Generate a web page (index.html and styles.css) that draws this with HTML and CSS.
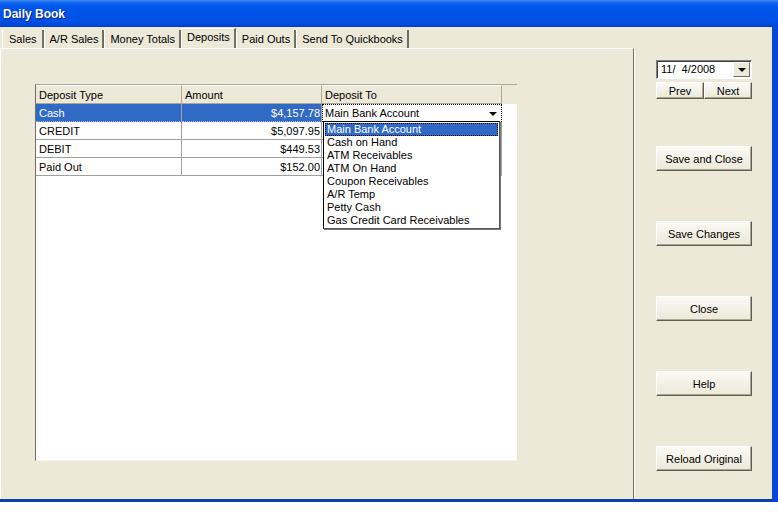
FILE: index.html
```html
<!DOCTYPE html>
<html lang="en">
<head>
  <meta charset="UTF-8">
  <title>Daily Book</title>
  <link rel="stylesheet" href="styles.css">
</head>
<body>
  <div class="window">
    <div class="titlebar">Daily Book</div>
    <div class="client">
      <div class="tabs">
        <div class="tab first">Sales</div>
        <div class="tab">A/R Sales</div>
        <div class="tab">Money Totals</div>
        <div class="tab active">Deposits</div>
        <div class="tab">Paid Outs</div>
        <div class="tab">Send To Quickbooks</div>
      </div>
      <div class="frame">
        <div class="page">
          <div class="grid">
            <div class="grid-head">
              <div class="hcell c1">Deposit Type</div>
              <div class="hcell c2">Amount</div>
              <div class="hcell c3">Deposit To</div>
            </div>
            <div class="grid-row selected">
              <div class="cell c1">Cash</div>
              <div class="cell c2 num">$4,157.78</div>
              <div class="cell c3 editor">
                <span>Main Bank Account</span>
                <span class="drop-btn"><span class="arrow"></span></span>
              </div>
            </div>
            <div class="grid-row">
              <div class="cell c1">CREDIT</div>
              <div class="cell c2 num">$5,097.95</div>
              <div class="cell c3"></div>
            </div>
            <div class="grid-row">
              <div class="cell c1">DEBIT</div>
              <div class="cell c2 num">$449.53</div>
              <div class="cell c3"></div>
            </div>
            <div class="grid-row">
              <div class="cell c1">Paid Out</div>
              <div class="cell c2 num">$152.00</div>
              <div class="cell c3"></div>
            </div>

            <ul class="droplist">
              <li class="hi">Main Bank Account</li>
              <li>Cash on Hand</li>
              <li>ATM Receivables</li>
              <li>ATM On Hand</li>
              <li>Coupon Receivables</li>
              <li>A/R Temp</li>
              <li>Petty Cash</li>
              <li>Gas Credit Card Receivables</li>
            </ul>
          </div>
        </div>
        <div class="side">
          <div class="datebox">
            <span>11/&nbsp; 4/2008</span>
            <span class="drop-btn"><span class="arrow"></span></span>
          </div>
          <div class="prevnext">
            <button class="btn small">Prev</button>
            <button class="btn small">Next</button>
          </div>
          <button class="btn big first">Save and Close</button>
          <button class="btn big">Save Changes</button>
          <button class="btn big">Close</button>
          <button class="btn big">Help</button>
          <button class="btn big">Reload Original</button>
        </div>
      </div>
    </div>
  </div>
</body>
</html>
```

FILE: styles.css
```css
:root {
  --face: #ece9d8;
  --shadow: #aca899;
  --dark: #716f64;
  --sel: #316ac5;
  --xpblue: #0054e3;
}

body {
  margin: 0;
  background: #fff;
  font-family: 'Liberation Sans', Arial, sans-serif;
  font-size: 11px;
  color: #000;
}

.window {
  width: 778px;
  height: 512px;
  background: #fff;
}

.titlebar {
  height: 27px;
  box-sizing: border-box;
  padding: 7px 0 0 3px;
  font-size: 12px;
  font-weight: bold;
  color: #fff;
  text-shadow: 1px 1px 0 #0a1e8c;
  background: linear-gradient(to bottom, #3c8cf6 0px, #0f62ee 3px, #0055ea 8px, #0052e6 20px, #0048dc 25px, #003fcb 27px);
}

.client {
  width: 778px;
  height: 475px;
  box-sizing: border-box;
  background: var(--face);
  border-right: 6px solid #0747d6;
  border-bottom: 3px solid #0a3fb8;
  display: flex;
  flex-direction: column;
}

/* tabs */
.tabs {
  height: 21px;
  display: flex;
  align-items: flex-end;
  padding-left: 2px;
}

.tab {
  height: 18px;
  box-sizing: border-box;
  padding: 3px 4px 0 5px;
  border-left: 1px solid #fff;
  border-right: 2px solid var(--dark);
  white-space: nowrap;
}

.tab.first {
  padding-left: 6px;
  padding-right: 5px;
}

.tab.active {
  height: 20px;
  padding: 2px 4px 0 5px;
  background: var(--face);
  border-top: 1px solid #fff;
}

.frame {
  flex: 1;
  display: flex;
}

.page {
  width: 634px;
  box-sizing: border-box;
  border-top: 1px solid #fff;
  border-left: 1px solid #fff;
  border-right: 1px solid var(--dark);
  padding: 35px 0 0 34px;
}

/* grid */
.grid {
  position: relative;
  width: 482px;
  height: 377px;
  box-sizing: border-box;
  background: #fff;
  border-top: 1px solid var(--shadow);
  border-left: 1px solid var(--dark);
  border-bottom: 1px solid #f4f2ea;
}

.grid-head,
.grid-row {
  display: grid;
  grid-template-columns: 146px 140px 180px;
}

.grid-head {
  height: 19px;
  background: var(--face);
}

.hcell {
  padding: 3px 0 0 3px;
  border-right: 1px solid var(--shadow);
  border-bottom: 1px solid var(--shadow);
  border-top: 1px solid #fff;
}

.grid-row {
  height: 18px;
}

.cell {
  box-sizing: border-box;
  padding: 3px 2px 0 3px;
  border-right: 1px solid #a0a0a0;
  border-bottom: 1px solid #a0a0a0;
  white-space: nowrap;
}

.cell.num {
  text-align: right;
  padding-right: 1px;
}

.selected .c1,
.selected .c2 {
  background: var(--sel);
  color: #fff;
  border-bottom: 1px dotted #9fb5e0;
}

.editor {
  display: flex;
  justify-content: space-between;
  padding: 2px 0 0 2px;
  border: 1px dotted #000;
}

.drop-btn {
  width: 16px;
  height: 15px;
  box-sizing: border-box;
  display: flex;
  align-items: center;
  justify-content: center;
  margin-top: -1px;
}

.arrow {
  width: 0;
  height: 0;
  border-left: 4px solid transparent;
  border-right: 4px solid transparent;
  border-top: 4px solid #000;
}

.droplist {
  position: absolute;
  left: 287px;
  top: 36px;
  width: 177px;
  margin: 0;
  padding: 1px 0;
  list-style: none;
  background: #fff;
  border: 1px solid #000;
  border-right-color: #555;
  border-bottom-color: #555;
  box-shadow: 1px 1px 0 #777;
  box-sizing: border-box;
}

.droplist li {
  height: 13px;
  line-height: 13px;
  padding-left: 3px;
}

.droplist li.hi {
  background: var(--sel);
  color: #fff;
  outline: 1px dotted #000;
  outline-offset: -1px;
  margin: 0 1px;
  padding-left: 2px;
}

/* right column */
.side {
  width: 132px;
  box-sizing: border-box;
  padding: 12px 0 0 21px;
  display: flex;
  flex-direction: column;
  border-left: 1px solid #fff;
}

.datebox {
  width: 96px;
  height: 19px;
  box-sizing: border-box;
  background: #fff;
  border: 1px solid;
  border-color: #7f7f7f #fff #fff #7f7f7f;
  box-shadow: inset 1px 1px 0 #404040;
  display: flex;
  justify-content: space-between;
  padding: 2px 1px 0 4px;
}

.datebox .drop-btn {
  background: var(--face);
  border: 1px solid;
  border-color: #fff var(--dark) var(--dark) #fff;
  height: 15px;
  width: 17px;
  margin-top: -1px;
}

.prevnext {
  display: flex;
  margin-top: 3px;
}

.btn {
  font-family: inherit;
  font-size: 11px;
  color: #000;
  background: linear-gradient(to bottom, #fbfaf5, #ece9d8);
  border: 1px solid;
  border-color: #fff #5f5d54 #5f5d54 #fff;
  box-shadow: inset -1px -1px 0 #aca899;
  padding: 0;
}

.btn.small {
  width: 48px;
  height: 17px;
}

.btn.big {
  width: 96px;
  height: 25px;
  margin-top: 50px;
}

.btn.big.first {
  margin-top: 47px;
}
```
